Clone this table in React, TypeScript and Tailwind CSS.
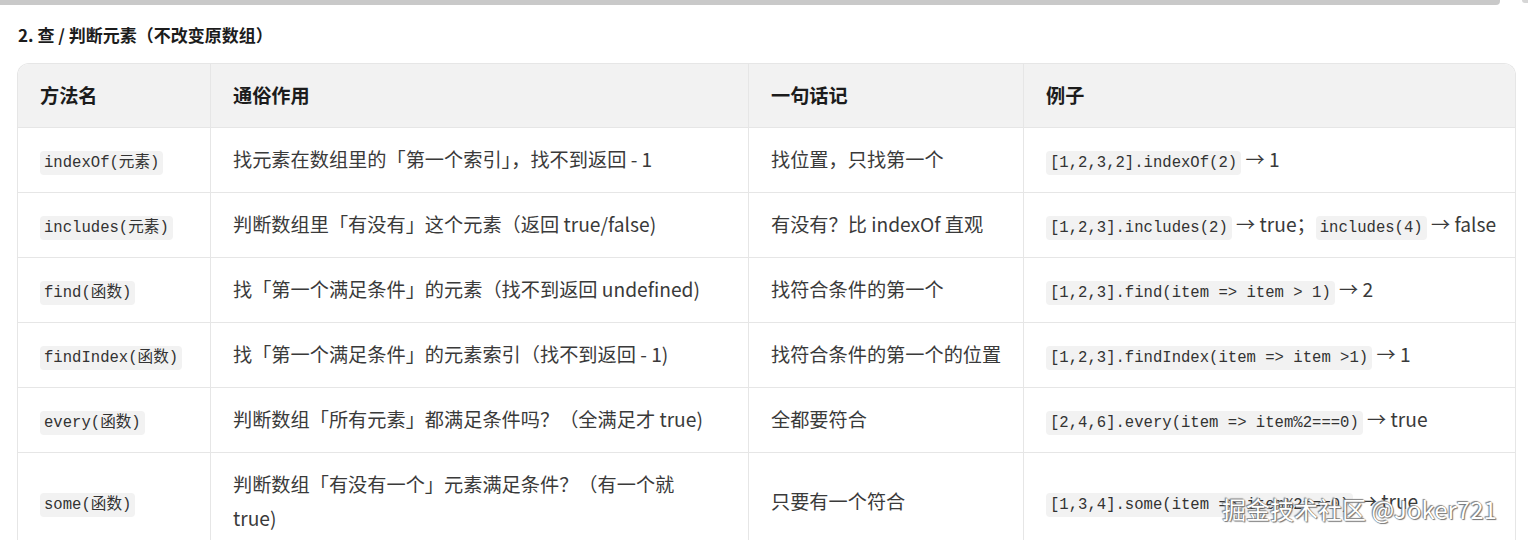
const rows: { name: string; desc: React.ReactNode; memo: string; example: React.ReactNode }[] = [
  {
    name: "indexOf(元素)",
    desc: "找元素在数组里的「第一个索引」，找不到返回 - 1",
    memo: "找位置，只找第一个",
    example: (
      <>
        <Code>[1,2,3,2].indexOf(2)</Code> → 1
      </>
    ),
  },
  {
    name: "includes(元素)",
    desc: "判断数组里「有没有」这个元素（返回 true/false)",
    memo: "有没有？比 indexOf 直观",
    example: (
      <>
        <Code>[1,2,3].includes(2)</Code> → true；<Code>includes(4)</Code> → false
      </>
    ),
  },
  {
    name: "find(函数)",
    desc: "找「第一个满足条件」的元素（找不到返回 undefined)",
    memo: "找符合条件的第一个",
    example: (
      <>
        <Code>[1,2,3].find(item =&gt; item &gt; 1)</Code> → 2
      </>
    ),
  },
  {
    name: "findIndex(函数)",
    desc: "找「第一个满足条件」的元素索引（找不到返回 - 1)",
    memo: "找符合条件的第一个的位置",
    example: (
      <>
        <Code>[1,2,3].findIndex(item =&gt; item &gt;1)</Code> → 1
      </>
    ),
  },
  {
    name: "every(函数)",
    desc: "判断数组「所有元素」都满足条件吗？（全满足才 true)",
    memo: "全都要符合",
    example: (
      <>
        <Code>[2,4,6].every(item =&gt; item%2===0)</Code> → true
      </>
    ),
  },
  {
    name: "some(函数)",
    desc: (
      <>
        判断数组「有没有一个」元素满足条件？（有一个就
        <br />
        true)
      </>
    ),
    memo: "只要有一个符合",
    example: (
      <>
        <Code>[1,3,4].some(item =&gt; item%2===0)</Code> → true
      </>
    ),
  },
];

function Code({ children }: { children: React.ReactNode }) {
  return (
    <code className="rounded-[4px] bg-[#f2f2f2] px-[4px] py-[3px] font-['Liberation_Mono','Noto_Sans_CJK_SC',monospace] text-[15.6px] leading-[18px] text-[#333]">
      {children}
    </code>
  );
}

const cell = "flex items-center pl-[22px] pr-[8px] py-[15.2px] border-[#e6e6e6]";

export default function App() {
  return (
    <div className="relative h-[540px] overflow-hidden bg-white font-['Noto_Sans_CJK_SC','Noto_Sans',sans-serif] text-[#3a3a3a]">
      {/* scrollbar of the block above */}
      <div className="flex items-start">
        <div className="h-[5px] w-[1500px] rounded-br-[4px] bg-[#c9c9c9]" />
        <div className="ml-[22px] h-[3px] w-[6px] rounded-bl-[3px] bg-[#d6d6d6]" />
      </div>

      {/* heading */}
      <h3 className="ml-[18px] mt-[17px] text-[17px] font-bold leading-[26px] text-[#1c1c1c]">
        2. 查 / 判断元素（不改变原数组）
      </h3>

      {/* table */}
      <div className="ml-[17px] mt-[15px] w-[1499px] overflow-hidden rounded-t-[12px] border border-b-0 border-[#e6e6e6]">
        <div className="grid grid-cols-[193px_538px_275px_1fr] text-[19.2px] leading-[33.6px]">
          {/* header */}
          {["方法名", "通俗作用", "一句话记", "例子"].map((h, i) => (
            <div
              key={h}
              className={`${cell} h-[63px] bg-[#f2f2f2] font-bold text-[#1c1c1c] ${i < 3 ? "border-r" : ""}`}
            >
              {h}
            </div>
          ))}
          {/* rows */}
          {rows.map((r) => (
            <div key={r.name} className="contents">
              <div className={`${cell} border-t border-r`}>
                <span>
                  <Code>{r.name}</Code>
                </span>
              </div>
              <div className={`${cell} border-t border-r`}>
                <span>{r.desc}</span>
              </div>
              <div className={`${cell} border-t border-r whitespace-nowrap`}>
                <span>{r.memo}</span>
              </div>
              <div className={`${cell} border-t whitespace-nowrap`}>
                <span>{r.example}</span>
              </div>
            </div>
          ))}
        </div>
      </div>

      {/* watermark */}
      <div className="absolute left-[1222px] top-[492px] whitespace-nowrap text-[24px] leading-[34px] text-white [text-shadow:0_0_1px_#555,1px_1px_1px_#777,-1px_-1px_1px_#888]">
        掘金技术社区 @Joker721
      </div>
    </div>
  );
}
